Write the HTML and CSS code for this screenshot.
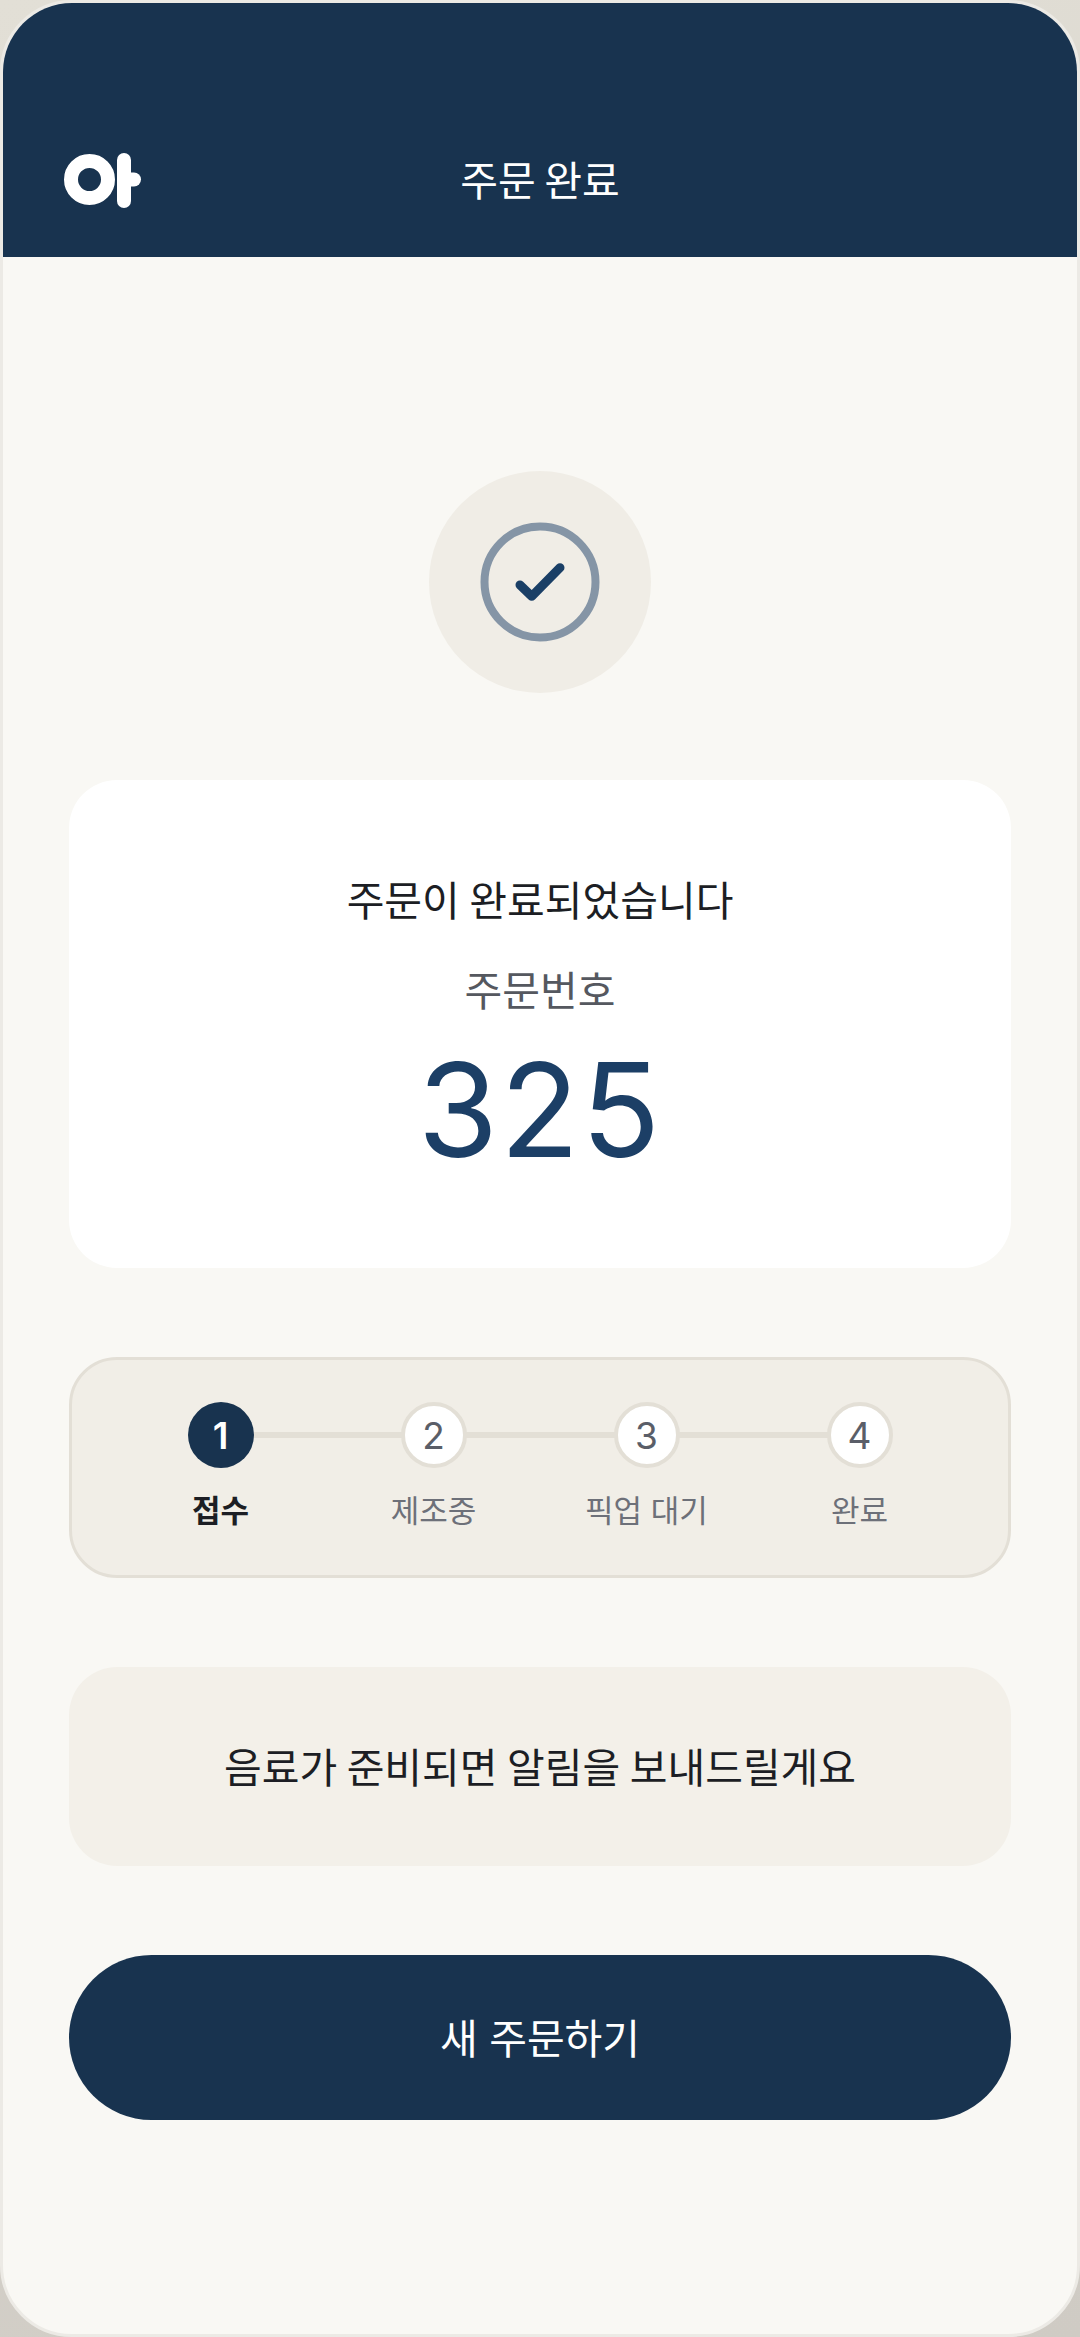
FILE: index.html
```html
<!DOCTYPE html>
<html lang="ko">
<head>
    <meta charset="UTF-8">
    <meta name="viewport" content="width=device-width, initial-scale=1.0">
    <title>주문 완료</title>
    <link rel="stylesheet" href="styles.css">
</head>
<body>
    <div class="frame">
        <header class="top-bar">
            <svg class="logo" width="78" height="58" viewBox="0 0 78 58" fill="none" stroke="#fff" stroke-linecap="round">
                <circle cx="25.5" cy="27.5" r="18.5" stroke-width="14"/>
                <path d="M60 8V49" stroke-width="14"/>
                <path d="M60 27.5H70" stroke-width="14"/>
            </svg>
            <h1 class="top-title">주문 완료</h1>
        </header>

        <main class="content">
            <div class="check-badge">
                <svg width="120" height="120" viewBox="0 0 120 120" fill="none">
                    <circle cx="60" cy="60" r="55.5" stroke="#8595a6" stroke-width="8"/>
                    <path d="M40 63L51.7 74.3L80 45.7" stroke="#1a3f66" stroke-width="9" stroke-linecap="round" stroke-linejoin="round"/>
                </svg>
            </div>

            <section class="order-card">
                <p class="order-done">주문이 완료되었습니다</p>
                <p class="order-label">주문번호</p>
                <p class="order-number">325</p>
            </section>

            <ol class="steps">
                <li class="step step-active"><span class="step-dot">1</span><span class="step-name">접수</span></li>
                <li class="step"><span class="step-dot">2</span><span class="step-name">제조중</span></li>
                <li class="step"><span class="step-dot">3</span><span class="step-name">픽업 대기</span></li>
                <li class="step"><span class="step-dot">4</span><span class="step-name">완료</span></li>
            </ol>

            <div class="notice">음료가 준비되면 알림을 보내드릴게요</div>

            <button class="new-order">새 주문하기</button>
        </main>
    </div>
</body>
</html>
```

FILE: styles.css
```css
* {
    box-sizing: border-box;
}

body {
    margin: 0;
    width: 1080px;
    height: 2337px;
    background: linear-gradient(160deg, #e2dfd6, #cfcbc4);
    font-family: Inter, "Noto Sans CJK KR", sans-serif;
    color: #1c1e24;
}

.frame {
    height: 2337px;
    border: 3px solid #eceae5;
    border-radius: 72px;
    background-color: #f9f8f4;
    overflow: hidden;
}

.top-bar {
    display: grid;
    grid-template-columns: 1fr auto 1fr;
    align-items: center;
    height: 254px;
    padding-top: 98px;
    background-color: #18334f;
    color: #fff;
}

.logo {
    display: block;
    margin: 4px 0 0 61px;
}

.top-title {
    margin: 0 0 2px;
    font-size: 41px;
    font-weight: 400;
    word-spacing: -3px;
}

.content {
    display: flex;
    flex-direction: column;
    align-items: stretch;
    gap: 89px;
    padding: 214px 66px 0;
}

.check-badge {
    display: flex;
    align-items: center;
    justify-content: center;
    width: 222px;
    height: 222px;
    margin: 0 auto -2px;
    border-radius: 50%;
    background-color: #f0ede6;
}

.order-card {
    display: flex;
    flex-direction: column;
    align-items: center;
    height: 488px;
    padding-top: 91px;
    border-radius: 48px;
    background-color: #fff;
}

.order-card p {
    margin: 0;
}

.order-done {
    font-size: 41px;
    line-height: 60px;
    word-spacing: -2px;
}

.order-label {
    margin-top: 30px !important;
    font-size: 41px;
    line-height: 60px;
    color: #55585f;
}

.order-number {
    margin-top: 14px !important;
    font-size: 130px;
    line-height: 150px;
    letter-spacing: 2px;
    color: #1c3f66;
}

.steps {
    display: flex;
    justify-content: center;
    height: 221px;
    margin: 0;
    padding: 42px 0 0;
    border: 3px solid #e3dfd6;
    border-radius: 48px;
    background-color: #f1eee7;
    list-style: none;
}

.step {
    position: relative;
    display: flex;
    flex-direction: column;
    align-items: center;
    width: 213px;
}

.step:not(:last-child)::after {
    content: "";
    position: absolute;
    top: 30px;
    left: 50%;
    width: 100%;
    height: 6px;
    background-color: #e3dfd6;
}

.step-dot {
    position: relative;
    z-index: 1;
    display: flex;
    align-items: center;
    justify-content: center;
    width: 66px;
    height: 66px;
    border: 4px solid #e3dfd6;
    border-radius: 50%;
    background-color: #fff;
    font-size: 37px;
    color: #5a5e68;
}

.step-name {
    margin-top: 21px;
    font-size: 31px;
    line-height: 44px;
    white-space: nowrap;
    color: #6d7079;
}

.step-active .step-dot {
    border: 0;
    background-color: #18334f;
    font-weight: 600;
    color: #fff;
}

.step-active .step-name {
    font-weight: 700;
    color: #1c1e24;
}

.notice {
    display: flex;
    align-items: center;
    justify-content: center;
    height: 199px;
    padding-bottom: 3px;
    border-radius: 48px;
    background-color: #f3f0e9;
    font-size: 41px;
    word-spacing: -2px;
}

.new-order {
    height: 165px;
    padding-bottom: 5px;
    border: 0;
    border-radius: 83px;
    background-color: #18334f;
    font-family: inherit;
    font-size: 41px;
    color: #fff;
}
```
